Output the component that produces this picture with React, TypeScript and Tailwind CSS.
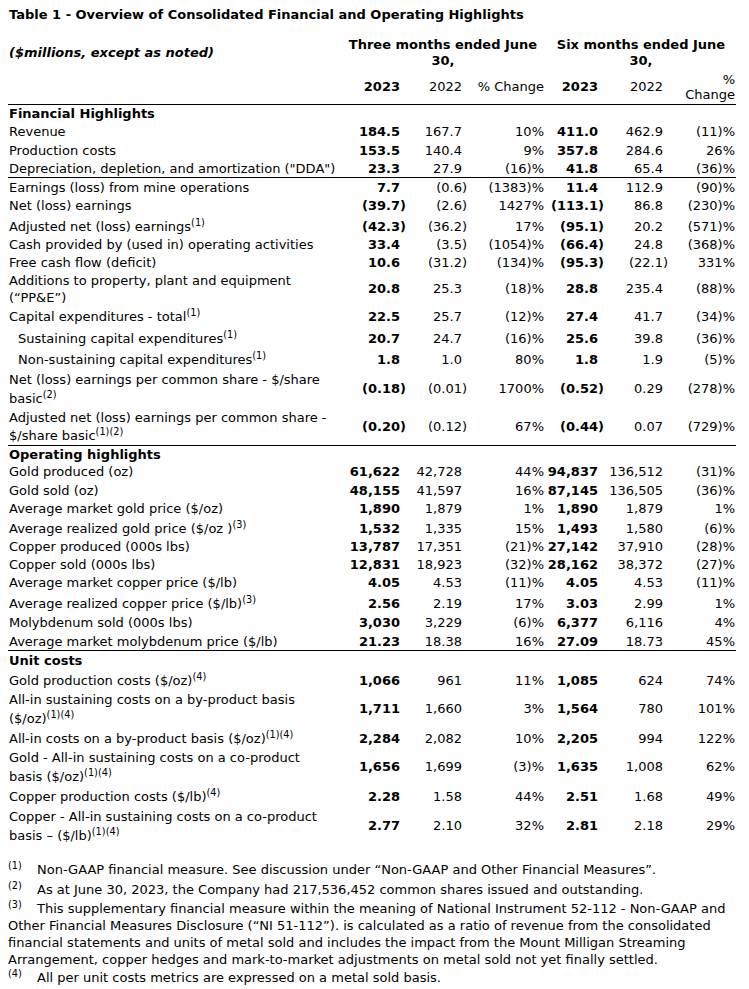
import type { ReactNode } from "react";

const cols = "grid grid-cols-[332px_60px_62px_82px_54px_65px_73px]";

type Row = {
  label: ReactNode;
  v?: string[];
  cls: string;
  lh?: string;
  section?: boolean;
  indent?: boolean;
};

const S = ({ n }: { n: string }) => <sup>{n}</sup>;

const rows: Row[] = [
  { label: "Financial Highlights", section: true, cls: "h-[18px]" },
  { label: "Revenue", v: ["184.5", "167.7", "10%", "411.0", "462.9", "(11)%"], cls: "h-[18px]" },
  { label: "Production costs", v: ["153.5", "140.4", "9%", "357.8", "284.6", "26%"], cls: "h-[19px]" },
  {
    label: 'Depreciation, depletion, and amortization ("DDA")',
    v: ["23.3", "27.9", "(16)%", "41.8", "65.4", "(36)%"],
    cls: "h-[18px] border-b border-black",
  },
  { label: "Earnings (loss) from mine operations", v: ["7.7", "(0.6)", "(1383)%", "11.4", "112.9", "(90)%"], cls: "h-[19px]" },
  { label: "Net (loss) earnings", v: ["(39.7)", "(2.6)", "1427%", "(113.1)", "86.8", "(230)%"], cls: "h-[18px]" },
  {
    label: <>Adjusted net (loss) earnings<S n="(1)" /></>,
    v: ["(42.3)", "(36.2)", "17%", "(95.1)", "20.2", "(571)%"],
    cls: "h-[21px] pt-[3px]",
  },
  {
    label: "Cash provided by (used in) operating activities",
    v: ["33.4", "(3.5)", "(1054)%", "(66.4)", "24.8", "(368)%"],
    cls: "h-[18px]",
  },
  { label: "Free cash flow (deficit)", v: ["10.6", "(31.2)", "(134)%", "(95.3)", "(22.1)", "331%"], cls: "h-[18px]" },
  {
    label: <>Additions to property, plant and equipment<br />(“PP&amp;E”)</>,
    v: ["20.8", "25.3", "(18)%", "28.8", "235.4", "(88)%"],
    cls: "h-[34px]",
    lh: "leading-[17px]",
  },
  {
    label: <>Capital expenditures - total<S n="(1)" /></>,
    v: ["22.5", "25.7", "(12)%", "27.4", "41.7", "(34)%"],
    cls: "h-[20px] pt-[2px]",
  },
  {
    label: <>Sustaining capital expenditures<S n="(1)" /></>,
    v: ["20.7", "24.7", "(16)%", "25.6", "39.8", "(36)%"],
    cls: "h-[22px] pt-[3px]",
    indent: true,
  },
  {
    label: <>Non-sustaining capital expenditures<S n="(1)" /></>,
    v: ["1.8", "1.0", "80%", "1.8", "1.9", "(5)%"],
    cls: "h-[21px] pt-[3px]",
    indent: true,
  },
  {
    label: <>Net (loss) earnings per common share - $/share<br />basic<S n="(2)" /></>,
    v: ["(0.18)", "(0.01)", "1700%", "(0.52)", "0.29", "(278)%"],
    cls: "h-[39px] pt-[1px]",
    lh: "leading-[19px]",
  },
  {
    label: <>Adjusted net (loss) earnings per common share -<br />$/share basic<S n="(1)" /><S n="(2)" /></>,
    v: ["(0.20)", "(0.12)", "67%", "(0.44)", "0.07", "(729)%"],
    cls: "h-[38px] pt-[1px] border-b border-black",
    lh: "leading-[18px]",
  },
  { label: "Operating highlights", section: true, cls: "h-[17px]" },
  { label: "Gold produced (oz)", v: ["61,622", "42,728", "44%", "94,837", "136,512", "(31)%"], cls: "h-[18px]" },
  { label: "Gold sold (oz)", v: ["48,155", "41,597", "16%", "87,145", "136,505", "(36)%"], cls: "h-[19px]" },
  { label: "Average market gold price ($/oz)", v: ["1,890", "1,879", "1%", "1,890", "1,879", "1%"], cls: "h-[17px]" },
  {
    label: <>Average realized gold price ($/oz )<S n="(3)" /></>,
    v: ["1,532", "1,335", "15%", "1,493", "1,580", "(6)%"],
    cls: "h-[21px] pt-[3px]",
  },
  { label: "Copper produced (000s lbs)", v: ["13,787", "17,351", "(21)%", "27,142", "37,910", "(28)%"], cls: "h-[18px]" },
  { label: "Copper sold (000s lbs)", v: ["12,831", "18,923", "(32)%", "28,162", "38,372", "(27)%"], cls: "h-[18px]" },
  { label: "Average market copper price ($/lb)", v: ["4.05", "4.53", "(11)%", "4.05", "4.53", "(11)%"], cls: "h-[18px]" },
  {
    label: <>Average realized copper price ($/lb)<S n="(3)" /></>,
    v: ["2.56", "2.19", "17%", "3.03", "2.99", "1%"],
    cls: "h-[21px] pt-[3px]",
  },
  { label: "Molybdenum sold (000s lbs)", v: ["3,030", "3,229", "(6)%", "6,377", "6,116", "4%"], cls: "h-[19px]" },
  {
    label: "Average market molybdenum price ($/lb)",
    v: ["21.23", "18.38", "16%", "27.09", "18.73", "45%"],
    cls: "h-[19px] pt-[1px] border-b border-black",
  },
  { label: "Unit costs", section: true, cls: "h-[19px] pt-[1px]" },
  {
    label: <>Gold production costs ($/oz)<S n="(4)" /></>,
    v: ["1,066", "961", "11%", "1,085", "624", "74%"],
    cls: "h-[20px] pt-[2px]",
  },
  {
    label: <>All-in sustaining costs on a by-product basis<br />($/oz)<S n="(1)" /><S n="(4)" /></>,
    v: ["1,711", "1,660", "3%", "1,564", "780", "101%"],
    cls: "h-[38px]",
    lh: "leading-[19px]",
  },
  {
    label: <>All-in costs on a by-product basis ($/oz)<S n="(1)" /><S n="(4)" /></>,
    v: ["2,284", "2,082", "10%", "2,205", "994", "122%"],
    cls: "h-[20px] pt-[2px]",
  },
  {
    label: <>Gold - All-in sustaining costs on a co-product<br />basis ($/oz)<S n="(1)" /><S n="(4)" /></>,
    v: ["1,656", "1,699", "(3)%", "1,635", "1,008", "62%"],
    cls: "h-[38px]",
    lh: "leading-[19px]",
  },
  {
    label: <>Copper production costs ($/lb)<S n="(4)" /></>,
    v: ["2.28", "1.58", "44%", "2.51", "1.68", "49%"],
    cls: "h-[20px] pt-[2px]",
  },
  {
    label: <>Copper - All-in sustaining costs on a co-product<br />basis – ($/lb)<S n="(1)" /><S n="(4)" /></>,
    v: ["2.77", "2.10", "32%", "2.81", "2.18", "29%"],
    cls: "h-[39px] pt-[1px]",
    lh: "leading-[19px]",
  },
];

function Val({ v, i }: { v: string; i: number }) {
  const bold = i === 0 || i === 3;
  const hang = i !== 2 && i !== 5 && v.startsWith("(") && v.endsWith(")");
  return (
    <div className={`flex items-center justify-end whitespace-nowrap ${bold ? "font-bold" : ""} ${i === 5 ? "pr-[1px]" : ""}`}>
      {hang ? (
        <span>
          {v.slice(0, -1)}
          <span className="inline-block w-0">)</span>
        </span>
      ) : (
        v
      )}
    </div>
  );
}

export default function App() {
  return (
    <div className="min-h-screen bg-white pl-[8px] pt-[6px] text-[13px] leading-[18px] text-black font-['DejaVu_Sans',sans-serif]">
      <div className="pl-[1px] font-bold">Table 1 - Overview of Consolidated Financial and Operating Highlights</div>

      <div className="mt-[13px] w-[728px]">
        {/* column headings */}
        <div className={`${cols} h-[32px] font-bold`}>
          <div className="flex items-center pl-[1px] italic">($millions, except as noted)</div>
          <div className="col-span-3 pl-[2px] text-center leading-[16px]">
            Three months ended June
            <br />
            30,
          </div>
          <div className="col-span-3 pl-[2px] text-center leading-[16px]">
            Six months ended June
            <br />
            30,
          </div>
        </div>
        <div className={`${cols} h-[36px] border-b border-black`}>
          <div />
          <div className="flex items-center justify-end font-bold">2023</div>
          <div className="flex items-center justify-end">2022</div>
          <div className="flex items-center justify-end">% Change</div>
          <div className="flex items-center justify-end font-bold">2023</div>
          <div className="flex items-center justify-end">2022</div>
          <div className="flex items-center justify-end pr-[1px] text-right leading-[15px]">
            %
            <br />
            Change
          </div>
        </div>

        {rows.map((r, idx) => (
          <div key={idx} className={`${cols} ${r.cls}`}>
            <div className={`flex items-center whitespace-nowrap ${r.indent ? "pl-[10px]" : "pl-[1px]"} ${r.section ? "font-bold" : ""}`}>
              <div className={r.lh ?? ""}>{r.label}</div>
            </div>
            {r.v ? r.v.map((v, i) => <Val key={i} v={v} i={i} />) : null}
          </div>
        ))}
      </div>

      {/* footnotes */}
      <div className="mt-[14px] leading-[17px] whitespace-nowrap">
        <p className="pt-[2px]">
          <sup className="inline-block w-[29px]">(1)</sup>Non-GAAP financial measure. See discussion under “Non-GAAP and Other Financial Measures”.
        </p>
        <p className="pt-[3px]">
          <sup className="inline-block w-[29px]">(2)</sup>As at June 30, 2023, the Company had 217,536,452 common shares issued and outstanding.
        </p>
        <p className="pt-[2px]">
          <sup className="inline-block w-[29px]">(3)</sup>This supplementary financial measure within the meaning of National Instrument 52-112 - Non-GAAP and
          <br />
          Other Financial Measures Disclosure (“NI 51-112”). is calculated as a ratio of revenue from the consolidated
          <br />
          financial statements and units of metal sold and includes the impact from the Mount Milligan Streaming
          <br />
          Arrangement, copper hedges and mark-to-market adjustments on metal sold not yet finally settled.
        </p>
        <p className="pt-[1px]">
          <sup className="inline-block w-[29px]">(4)</sup>All per unit costs metrics are expressed on a metal sold basis.
        </p>
      </div>
    </div>
  );
}
